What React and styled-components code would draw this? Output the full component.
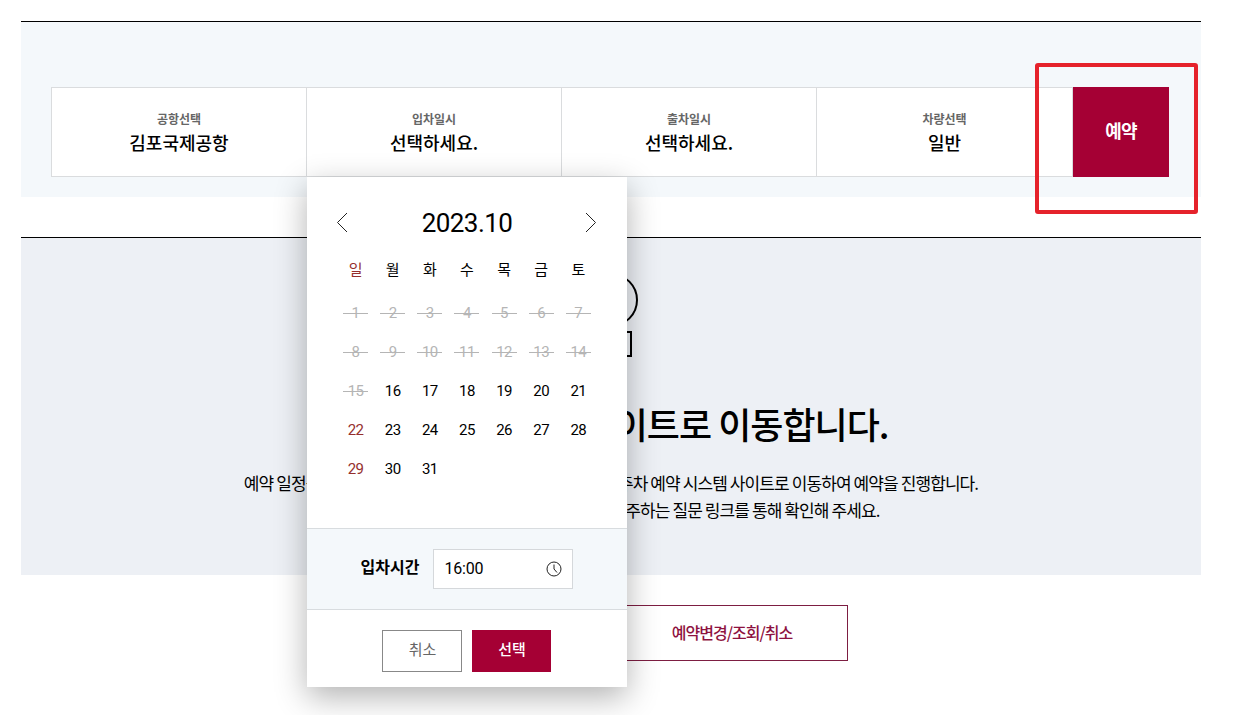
import React, { useState } from "react";
import styled, { createGlobalStyle } from "styled-components";

const GlobalStyle = createGlobalStyle`
  * {
    box-sizing: border-box;
  }
  body {
    margin: 0;
    background: #fff;
    color: #000;
    font-family: "Noto Sans CJK KR", sans-serif;
    overflow: hidden;
  }
  button {
    font-family: inherit;
    padding: 0;
    border: 0;
    background: none;
    cursor: pointer;
  }
`;

const Page = styled.main`
  width: 1180px;
  height: 715px;
  margin-left: 21px;
  padding-top: 21px;
`;

const SearchSection = styled.section`
  height: 176px;
  padding: 65px 32px 20px 30px;
  border-top: 1px solid #000;
  background: #f4f8fb;
`;

const SearchBar = styled.div`
  position: relative;
  display: flex;
  height: 90px;
`;

const Field = styled.div`
  width: ${(props) => (props.$last ? 257 : 255)}px;
  display: flex;
  flex-direction: column;
  align-items: center;
  padding-top: 21px;
  border: 1px solid #dadcde;
  border-right-width: ${(props) => (props.$last ? 1 : 0)}px;
  background: #fff;
`;

const FieldLabel = styled.span`
  font-size: 12px;
  font-weight: 700;
  line-height: 20px;
  color: #666;
`;

const FieldValue = styled.strong`
  font-size: 18px;
  font-weight: 500;
  line-height: 26px;
`;

const ReserveButton = styled.button`
  width: 96px;
  padding-bottom: 4px;
  background: #a50034;
  color: #fff;
  font-size: 18px;
  font-weight: 700;
  letter-spacing: -0.9px;
`;

const Highlight = styled.div`
  position: absolute;
  top: -24px;
  right: -29px;
  width: 163px;
  height: 151px;
  border: 4px solid #e5222b;
  border-radius: 3px;
  pointer-events: none;
`;

const Notice = styled.section`
  height: 338px;
  margin-top: 40px;
  padding-top: 35px;
  border-top: 1px solid #000;
  background: #edf0f5;
  text-align: center;
`;

const NoticeIcon = styled.svg`
  display: block;
  margin: 0 auto;
`;

const NoticeTitle = styled.h2`
  margin: 32px 0 0 3px;
  font-size: 36px;
  font-weight: 500;
  line-height: 60px;
  letter-spacing: -1px;
`;

const NoticeText = styled.p`
  margin: 16px 0 0;
  font-size: 17px;
  line-height: 27px;
  letter-spacing: -0.9px;
  white-space: nowrap;
`;

const LinkRow = styled.div`
  display: flex;
  justify-content: center;
  margin-top: 30px;
  padding-left: 242px;
`;

const LinkButton = styled.button`
  width: 232px;
  height: 56px;
  padding-bottom: 3px;
  border: 1px solid #7d1e42;
  background: #fff;
  color: #8e1240;
  font-size: 16px;
  font-weight: 500;
  letter-spacing: -0.95px;
`;

const Popup = styled.div`
  position: absolute;
  top: 90px;
  left: 256px;
  z-index: 2;
  width: 320px;
  height: 510px;
  display: flex;
  flex-direction: column;
  background: #fff;
  box-shadow: 0 10px 30px rgba(0, 0, 0, 0.3);
`;

const Calendar = styled.div`
  height: 351px;
  padding: 28px 30px 0;
`;

const MonthRow = styled.div`
  display: flex;
  align-items: center;
  justify-content: space-between;
  height: 36px;
`;

const ArrowButton = styled.button`
  display: flex;
  width: 11px;
  height: 20px;
`;

const Month = styled.span`
  font-family: Roboto, sans-serif;
  font-size: 26px;
  line-height: 36px;
  letter-spacing: -0.6px;
`;

const DayGrid = styled.div`
  display: grid;
  grid-template-columns: repeat(7, 37.14px);
`;

const Weekday = styled.span`
  height: 53px;
  font-size: 15px;
  line-height: 56px;
  text-align: center;
  color: ${(props) => (props.$sunday ? "#952f2d" : "#000")};
`;

const Day = styled.span`
  position: relative;
  height: 39px;
  font-family: Roboto, sans-serif;
  font-size: 15px;
  line-height: 39px;
  letter-spacing: -0.5px;
  text-align: center;
  color: ${(props) =>
    props.$past ? "#b5b5b5" : props.$sunday ? "#952f2d" : "#000"};

  &::after {
    content: "";
    display: ${(props) => (props.$past ? "block" : "none")};
    position: absolute;
    top: 19px;
    left: 6px;
    width: 25px;
    height: 1px;
    background: #b5b5b5;
  }
`;

const TimeRow = styled.div`
  display: flex;
  justify-content: center;
  align-items: center;
  gap: 14px;
  height: 82px;
  border: solid #d8dcdf;
  border-width: 1px 0;
  background: #f4f8fb;
`;

const TimeLabel = styled.span`
  padding-bottom: 6px;
  font-size: 16px;
  font-weight: 700;
  line-height: 24px;
`;

const TimeInput = styled.div`
  display: flex;
  align-items: center;
  justify-content: space-between;
  width: 140px;
  height: 40px;
  padding: 0 10px 1px;
  border: 1px solid #d5d8db;
  background: #fff;
  font-family: Roboto, sans-serif;
  font-size: 16px;
  letter-spacing: -0.2px;
`;

const Actions = styled.div`
  display: flex;
  justify-content: center;
  gap: 10px;
  padding: 20px 1px 0 0;
`;

const ActionButton = styled.button`
  width: ${(props) => (props.$primary ? 79 : 80)}px;
  height: 42px;
  padding: 0 0 5px 1px;
  border: 1px solid ${(props) => (props.$primary ? "#a50034" : "#888")};
  background: ${(props) => (props.$primary ? "#a50034" : "#fff")};
  color: ${(props) => (props.$primary ? "#fff" : "#666")};
  font-size: 15px;
  font-weight: ${(props) => (props.$primary ? 500 : 400)};
`;

const WEEKDAYS = ["일", "월", "화", "수", "목", "금", "토"];
const DAYS = Array.from({ length: 31 }, (_, i) => i + 1);
const TODAY = 16;

const Arrow = ({ next }) => (
  <svg width="11" height="20" viewBox="0 0 11 20" fill="none" stroke="#222">
    <path d={next ? "M0 0L9.5 9.5L0 19" : "M10 0L0.5 9.5L10 19"} />
  </svg>
);

const ClockIcon = () => (
  <svg width="16" height="16" viewBox="0 0 16 16" fill="none" stroke="#222">
    <circle cx="8" cy="8" r="7" />
    <path d="M8 3.5V8L11 11.5" />
  </svg>
);

const DatePopup = ({ onClose }) => (
  <Popup>
    <Calendar>
      <MonthRow>
        <ArrowButton aria-label="이전 달">
          <Arrow />
        </ArrowButton>
        <Month>2023.10</Month>
        <ArrowButton aria-label="다음 달">
          <Arrow next />
        </ArrowButton>
      </MonthRow>
      <DayGrid>
        {WEEKDAYS.map((name, i) => (
          <Weekday key={name} $sunday={i === 0}>
            {name}
          </Weekday>
        ))}
        {DAYS.map((day) => (
          <Day key={day} $past={day < TODAY} $sunday={day % 7 === 1}>
            {day}
          </Day>
        ))}
      </DayGrid>
    </Calendar>
    <TimeRow>
      <TimeLabel>입차시간</TimeLabel>
      <TimeInput>
        <span>16:00</span>
        <ClockIcon />
      </TimeInput>
    </TimeRow>
    <Actions>
      <ActionButton onClick={onClose}>취소</ActionButton>
      <ActionButton $primary onClick={onClose}>
        선택
      </ActionButton>
    </Actions>
  </Popup>
);

const FIELDS = [
  { label: "공항선택", value: "김포국제공항" },
  { label: "입차일시", value: "선택하세요." },
  { label: "출차일시", value: "선택하세요." },
  { label: "차량선택", value: "일반" },
];

const App = () => {
  const [open, setOpen] = useState(true);

  return (
    <>
      <GlobalStyle />
      <Page>
        <SearchSection>
          <SearchBar>
            {FIELDS.map(({ label, value }, i) => (
              <Field key={label} $last={i === FIELDS.length - 1}>
                <FieldLabel>{label}</FieldLabel>
                <FieldValue>{value}</FieldValue>
              </Field>
            ))}
            <ReserveButton>예약</ReserveButton>
            {open && <DatePopup onClose={() => setOpen(false)} />}
            <Highlight />
          </SearchBar>
        </SearchSection>
        <Notice>
          <NoticeIcon
            width="60"
            height="88"
            viewBox="0 0 60 88"
            fill="none"
            stroke="#000"
            strokeWidth="2"
          >
            <circle cx="30" cy="27" r="26" />
            <rect x="10" y="59" width="40" height="24" />
          </NoticeIcon>
          <NoticeTitle>주차 예약 시스템 사이트로 이동합니다.</NoticeTitle>
          <NoticeText>
            예약 일정을 모두 확인하시고 차량을 선택하시면 김포공항 주차 예약
            시스템 사이트로 이동하여 예약을 진행합니다.
            <br />
            예약과 주차장 이용에 관한 자세한 사항은 자주하는 질문 링크를 통해
            확인해 주세요.
          </NoticeText>
        </Notice>
        <LinkRow>
          <LinkButton>예약변경/조회/취소</LinkButton>
        </LinkRow>
      </Page>
    </>
  );
};

export default App;
